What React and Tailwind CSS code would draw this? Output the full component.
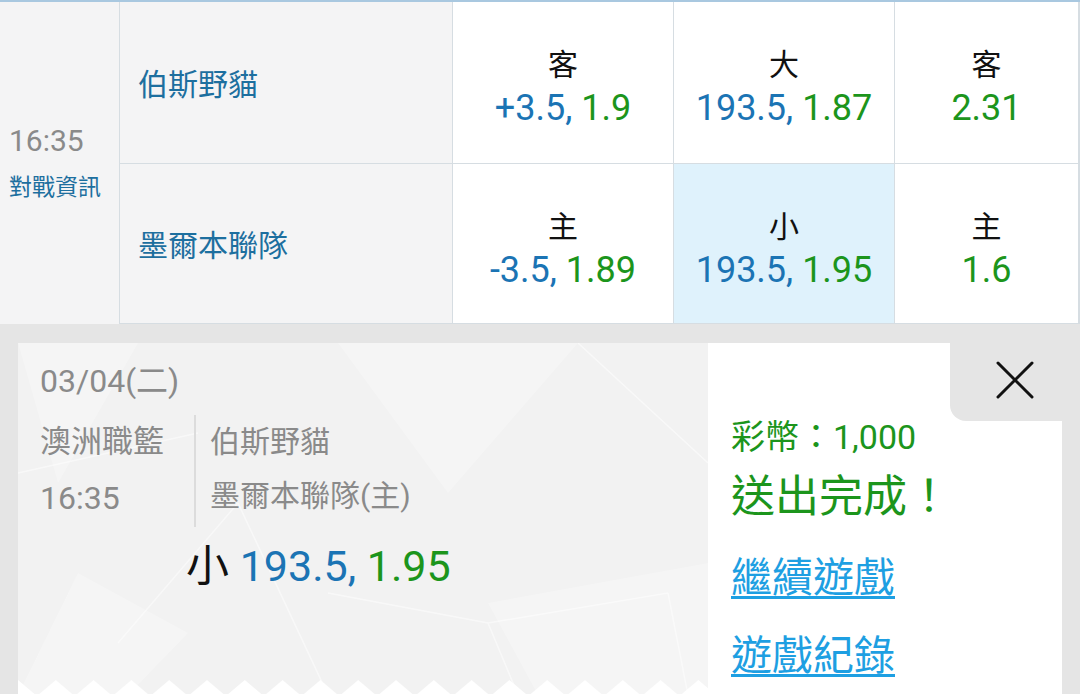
import React from "react";

const font = { fontFamily: "Roboto, 'Noto Sans CJK TC', sans-serif" };

const rows = [
  {
    team: "伯斯野貓",
    cells: [
      { label: "客", blue: "+3.5,", green: "1.9" },
      { label: "大", blue: "193.5,", green: "1.87" },
      { label: "客", green: "2.31" },
    ],
  },
  {
    team: "墨爾本聯隊",
    cells: [
      { label: "主", blue: "-3.5,", green: "1.89" },
      { label: "小", blue: "193.5,", green: "1.95", active: true },
      { label: "主", green: "1.6" },
    ],
  },
];

const OddsCell = ({ cell, last }) => (
  <div
    className={`flex flex-col items-center pt-[43px] border-b border-[#d6dde2] ${
      last ? "border-r-2" : "border-r"
    } ${cell.active ? "bg-[#dff2fc] border-[#b9d9ea]" : "bg-white"}`}
  >
    <div className="text-[30px] leading-[40px] text-[#111]">{cell.label}</div>
    <div className="text-[36px] leading-[46px]">
      {cell.blue && <span className="text-[#1b74b4]">{cell.blue} </span>}
      <span className="text-[#1c951c]">{cell.green}</span>
    </div>
  </div>
);

const Zigzag = () => {
  const w = 37.8;
  return (
    <svg className="absolute left-0 bottom-0" width="700" height="16" viewBox="0 0 700 16">
      {Array.from({ length: 20 }).map((_, i) => (
        <polygon
          key={i}
          points={`${i * w - w / 2},16 ${i * w},0 ${i * w + w / 2},16`}
          fill="#ffffff"
        />
      ))}
    </svg>
  );
};

// faint low-poly background on the ticket
const Pattern = () => (
  <svg className="absolute inset-0" width="690" height="352" viewBox="0 0 690 352">
    <g fill="#ffffff" fillOpacity="0.25">
      <polygon points="0,0 120,0 40,140" />
      <polygon points="320,0 560,0 430,150" />
      <polygon points="470,260 690,220 690,352 520,352" />
      <polygon points="60,230 170,290 110,352 0,352" />
    </g>
    <g stroke="#ffffff" strokeWidth="1.5" fill="none" opacity="0.5">
      <line x1="100" y1="300" x2="220" y2="160" />
      <line x1="220" y1="160" x2="310" y2="352" />
      <line x1="310" y1="250" x2="470" y2="280" />
      <line x1="470" y1="280" x2="650" y2="250" />
      <line x1="650" y1="250" x2="670" y2="352" />
      <line x1="470" y1="280" x2="500" y2="352" />
      <line x1="560" y1="0" x2="690" y2="120" />
      <line x1="0" y1="130" x2="180" y2="90" />
    </g>
  </svg>
);

export default function App() {
  return (
    <div className="w-[1080px] h-[694px] overflow-hidden bg-[#e5e5e5]" style={font}>
      {/* odds table */}
      <div className="grid grid-cols-[120px_333px_221px_221px_185px] grid-rows-[162px_160px] border-t-2 border-[#a9c8e0] bg-white">
        <div className="row-span-2 flex flex-col pl-[9px] pt-[119px] bg-[#f4f4f5] border-r border-[#d6dde2]">
          <div className="text-[30px] leading-[40px] text-[#8a8a8a]">16:35</div>
          <div className="mt-[10px] text-[23px] leading-[34px] text-[#1d6f9f]">對戰資訊</div>
        </div>
        {rows.map((row, ri) => (
          <React.Fragment key={ri}>
            <div className="flex items-center pl-[18px] pt-1 bg-[#f4f4f5] border-r border-b border-[#d6dde2] text-[30px] text-[#1d6f9f]">
              {row.team}
            </div>
            {row.cells.map((c, ci) => (
              <OddsCell key={ci} cell={c} last={ci === 2} />
            ))}
          </React.Fragment>
        ))}
      </div>

      {/* bet result panel */}
      <div className="h-[372px] pt-[19px] pl-[18px] pr-[18px]">
        <div className="flex h-[353px]">
          <div className="relative w-[690px] bg-[#f2f2f2] overflow-hidden">
            <Pattern />
            <div className="relative pl-[22px] pt-[17px] text-[#8a8a8a]">
              <div className="text-[32px] leading-[42px]">03/04(二)</div>
              <div className="flex mt-[13px]">
                <div className="w-[154px] text-[31px]">
                  <div className="leading-[54px]">澳洲職籃</div>
                  <div className="leading-[58px] text-[32px]">16:35</div>
                </div>
                <div className="border-l-2 border-[#dcdcdc] pl-[14px] text-[30px]">
                  <div className="leading-[54px]">伯斯野貓</div>
                  <div className="leading-[54px]">墨爾本聯隊(主)</div>
                </div>
              </div>
              <div className="mt-[13px] pl-[146px] text-[43px] leading-[52px]">
                <span className="text-[#111]">小 </span>
                <span className="text-[#1b74b4]">193.5, </span>
                <span className="text-[#1c951c]">1.95</span>
              </div>
            </div>
            <Zigzag />
          </div>

          <div className="relative flex-1 bg-white pl-[23px] pt-[73px]">
            <div className="absolute top-0 right-0 w-[112px] h-[78px] bg-[#e5e5e5] rounded-bl-[16px]">
              <svg className="ml-[46px] mt-[18px]" width="38" height="38" viewBox="0 0 38 38">
                <path d="M2 2 L36 36 M36 2 L2 36" stroke="#111" strokeWidth="3" strokeLinecap="round" />
              </svg>
            </div>
            <div className="text-[34px] leading-[42px] text-[#1c951c]">彩幣：1,000</div>
            <div className="mt-[13px] text-[44px] leading-[52px] text-[#1c951c]">送出完成！</div>
            <div className="mt-[29px] text-[41px] leading-[52px] text-[#1e9fe2] underline decoration-[3px] underline-offset-[4px]">
              繼續遊戲
            </div>
            <div className="mt-[26px] text-[41px] leading-[52px] text-[#1e9fe2] underline decoration-[3px] underline-offset-[4px]">
              遊戲紀錄
            </div>
          </div>
        </div>
      </div>
    </div>
  );
}
